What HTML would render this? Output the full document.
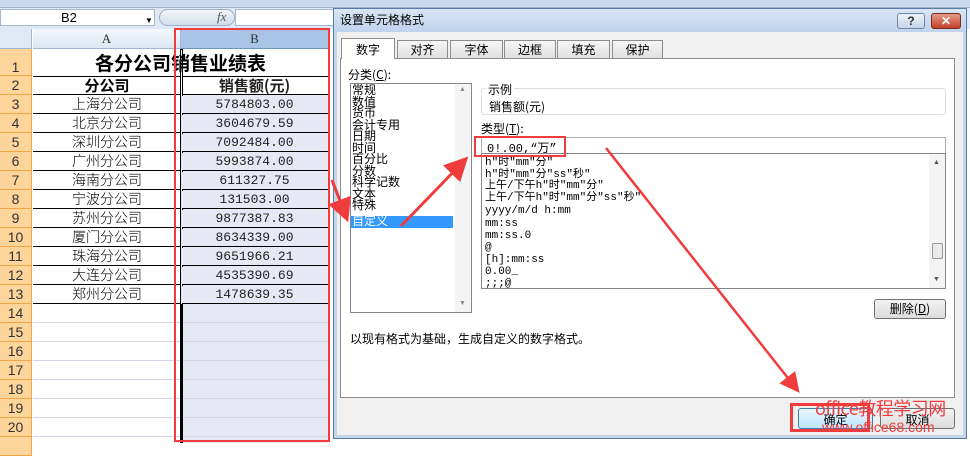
<!DOCTYPE html>
<html><head><meta charset="utf-8"><style>
*{margin:0;padding:0;box-sizing:border-box}
body{width:970px;height:443px;position:relative;overflow:hidden;background:#fff;font-family:"Liberation Sans","Noto Sans CJK SC",sans-serif;font-size:12px;color:#000}
.a{position:absolute}
.cj{font-family:"Noto Sans CJK SC","WenQuanYi Zen Hei",sans-serif}
.mono{font-family:"Liberation Mono","Noto Sans CJK SC",monospace}
.rh{position:absolute;left:0;width:32px;background:#fdd49a;border-bottom:1px solid #f2a64a;border-right:1px solid #f2a64a;text-align:center;font-size:14px;color:#333}
.ca{position:absolute;left:33px;width:148px;text-align:center;font-size:14px;font-weight:300}
.cb{position:absolute;left:181px;width:147px;text-align:center;font-size:13px;background:#e6e9f4;color:#222}
.hl{position:absolute;left:33px;width:295px;height:1px;background:#000}
.gl{position:absolute;left:33px;width:295px;height:1px;background:#d0d7e5}
.tab{position:absolute;top:40px;height:18px;background:linear-gradient(#f6f6f6,#e0e0e0);border:1px solid #8d8d8d;border-bottom:none;text-align:center;font-size:12px;line-height:17px}
.li{position:absolute;left:352px;font-size:12px;line-height:12px}
.ti{position:absolute;left:485px;font-size:11px;line-height:12px}
</style></head><body>
<div class="a" style="left:0;top:0;width:970px;height:8px;background:#c9d9ee;border-bottom:1px solid #9fb6d3"></div>
<div class="a" style="left:0;top:8px;width:970px;height:21px;background:#dfe8f5"></div>
<div class="a" style="left:0;top:9px;width:155px;height:17px;background:#fff;border:1px solid #a5b8d1;font-size:13px;line-height:15px;padding-left:60px">B2<span style="position:absolute;left:144px;font-size:8px;top:3px">▼</span></div>
<div class="a" style="left:159px;top:9px;width:76px;height:17px;border-radius:9px;background:linear-gradient(#f4f7fb,#d2dceb);border:1px solid #9fb2ca"></div>
<div class="a" style="left:217px;top:9px;font-style:italic;font-family:'Liberation Serif',serif;font-size:13px;color:#555">fx</div>
<div class="a" style="left:235px;top:9px;width:100px;height:17px;background:#fff;border:1px solid #a5b8d1"></div>
<div class="a" style="left:0;top:29px;width:32px;height:20px;background:#dfe8f5;border-right:1px solid #9eb6ce;border-bottom:1px solid #9eb6ce"></div>
<div class="a" style="left:33px;top:29px;width:148px;height:20px;background:linear-gradient(#f5f8fc,#dde6f2);border-right:1px solid #9eb6ce;border-bottom:1px solid #9eb6ce;text-align:center;font-size:13px;line-height:20px;color:#333;font-family:'Liberation Serif',serif">A</div>
<div class="a" style="left:181px;top:29px;width:147px;height:20px;background:#a9c4e6;border-bottom:1px solid #6f95c6;text-align:center;font-size:13px;line-height:20px;color:#333;font-family:'Liberation Serif',serif">B</div>
<div class="rh" style="top:49px;height:27px;line-height:36px">1</div>
<div class="rh" style="top:76px;height:19px;line-height:19px">2</div>
<div class="rh" style="top:95px;height:19px;line-height:19px">3</div>
<div class="rh" style="top:114px;height:19px;line-height:19px">4</div>
<div class="rh" style="top:133px;height:19px;line-height:19px">5</div>
<div class="rh" style="top:152px;height:19px;line-height:19px">6</div>
<div class="rh" style="top:171px;height:19px;line-height:19px">7</div>
<div class="rh" style="top:190px;height:19px;line-height:19px">8</div>
<div class="rh" style="top:209px;height:19px;line-height:19px">9</div>
<div class="rh" style="top:228px;height:19px;line-height:19px">10</div>
<div class="rh" style="top:247px;height:19px;line-height:19px">11</div>
<div class="rh" style="top:266px;height:19px;line-height:19px">12</div>
<div class="rh" style="top:285px;height:19px;line-height:19px">13</div>
<div class="rh" style="top:304px;height:19px;line-height:19px">14</div>
<div class="rh" style="top:323px;height:19px;line-height:19px">15</div>
<div class="rh" style="top:342px;height:19px;line-height:19px">16</div>
<div class="rh" style="top:361px;height:19px;line-height:19px">17</div>
<div class="rh" style="top:380px;height:19px;line-height:19px">18</div>
<div class="rh" style="top:399px;height:19px;line-height:19px">19</div>
<div class="rh" style="top:418px;height:19px;line-height:19px">20</div>
<div class="rh" style="top:437px;height:19px"></div>
<div class="a" style="left:181px;top:49px;width:147px;height:394px;background:#e6e9f4"></div>
<div class="a" style="left:181px;top:49px;width:147px;height:27px;background:#fff"></div>
<div class="a" style="left:181px;top:76px;width:147px;height:19px;background:#fff"></div>
<div class="gl" style="top:322px"></div><div class="gl" style="top:341px"></div><div class="gl" style="top:360px"></div><div class="gl" style="top:379px"></div><div class="gl" style="top:398px"></div><div class="gl" style="top:417px"></div><div class="gl" style="top:436px"></div>
<div class="hl" style="top:76px"></div><div class="hl" style="top:94px"></div><div class="hl" style="top:113px"></div><div class="hl" style="top:132px"></div><div class="hl" style="top:151px"></div><div class="hl" style="top:170px"></div><div class="hl" style="top:189px"></div><div class="hl" style="top:208px"></div><div class="hl" style="top:227px"></div><div class="hl" style="top:246px"></div><div class="hl" style="top:265px"></div><div class="hl" style="top:284px"></div><div class="hl" style="top:303px"></div>
<div class="a" style="left:180px;top:49px;width:3px;height:394px;background:#000"></div>
<div class="a" style="left:181px;top:50px;width:1px;height:254px;background:#fff"></div>
<div class="a cj" style="left:33px;top:50px;width:295px;text-align:center;font-size:19px;font-weight:bold;line-height:26px">各分公司销售业绩表</div>
<div class="ca cj" style="top:76px;line-height:19px;font-weight:bold;font-size:15px">分公司</div>
<div class="cb cj" style="top:76px;line-height:19px;font-weight:bold;font-size:15px;background:transparent">销售额(元)</div>
<div class="ca cj" style="top:95px;line-height:19px">上海分公司</div><div class="cb mono" style="top:96px;line-height:17px">5784803.00</div>
<div class="ca cj" style="top:114px;line-height:19px">北京分公司</div><div class="cb mono" style="top:115px;line-height:17px">3604679.59</div>
<div class="ca cj" style="top:133px;line-height:19px">深圳分公司</div><div class="cb mono" style="top:134px;line-height:17px">7092484.00</div>
<div class="ca cj" style="top:152px;line-height:19px">广州分公司</div><div class="cb mono" style="top:153px;line-height:17px">5993874.00</div>
<div class="ca cj" style="top:171px;line-height:19px">海南分公司</div><div class="cb mono" style="top:172px;line-height:17px">611327.75</div>
<div class="ca cj" style="top:190px;line-height:19px">宁波分公司</div><div class="cb mono" style="top:191px;line-height:17px">131503.00</div>
<div class="ca cj" style="top:209px;line-height:19px">苏州分公司</div><div class="cb mono" style="top:210px;line-height:17px">9877387.83</div>
<div class="ca cj" style="top:228px;line-height:19px">厦门分公司</div><div class="cb mono" style="top:229px;line-height:17px">8634339.00</div>
<div class="ca cj" style="top:247px;line-height:19px">珠海分公司</div><div class="cb mono" style="top:248px;line-height:17px">9651966.21</div>
<div class="ca cj" style="top:266px;line-height:19px">大连分公司</div><div class="cb mono" style="top:267px;line-height:17px">4535390.69</div>
<div class="ca cj" style="top:285px;line-height:19px">郑州分公司</div><div class="cb mono" style="top:286px;line-height:17px">1478639.35</div>
<div class="a" style="left:174px;top:28px;width:156px;height:414px;border:2px solid #f03c3c"></div>

<div class="a" style="left:333px;top:8px;width:634px;height:431px;background:#f0f0f0;border:1px solid #5a7ba6;box-shadow:inset 0 0 0 3px #c4d5ea"></div>
<div class="a" style="left:334px;top:9px;width:632px;height:23px;background:linear-gradient(#d8e5f4,#bfd3ec)"></div>
<div class="a cj" style="left:340px;top:11px;font-size:12px;line-height:18px">设置单元格格式</div>
<div class="a" style="left:897px;top:13px;width:28px;height:16px;border:1px solid #6d87a8;border-radius:3px;background:linear-gradient(#eef3f9,#c6d5e7);text-align:center;font-size:12px;font-weight:bold;line-height:14px;color:#333">?</div>
<div class="a" style="left:931px;top:13px;width:30px;height:16px;border:1px solid #7a2a20;border-radius:3px;background:linear-gradient(#e79a88,#c3402a);text-align:center;font-size:12px;font-weight:bold;line-height:14px;color:#fff">✕</div>
<div class="a" style="left:340px;top:58px;width:615px;height:340px;background:#fff;border:1px solid #8d8d8d"></div>
<div class="tab cj" style="left:341px;top:38px;width:54px;height:21px;background:#fff;border-color:#8d8d8d;line-height:21px;z-index:2">数字</div>
<div class="tab cj" style="left:397px;width:51px">对齐</div>
<div class="tab cj" style="left:450px;width:53px">字体</div>
<div class="tab cj" style="left:504px;width:52px">边框</div>
<div class="tab cj" style="left:557px;width:53px">填充</div>
<div class="tab cj" style="left:612px;width:51px">保护</div>
<div class="a cj" style="left:348px;top:66px;font-size:12px">分类(<u>C</u>):</div>
<div class="a" style="left:350px;top:83px;width:122px;height:230px;border:1px solid #828790;background:#fff"></div>
<div class="a" style="left:455px;top:84px;width:16px;height:228px;background:#f4f4f4"></div>
<div class="a" style="left:459px;top:86px;font-size:7px;color:#888">▲</div>
<div class="a" style="left:459px;top:300px;font-size:7px;color:#888">▼</div>
<div class="li cj" style="top:84px">常规</div>
<div class="li cj" style="top:96px">数值</div>
<div class="li cj" style="top:107px">货币</div>
<div class="li cj" style="top:119px">会计专用</div>
<div class="li cj" style="top:130px">日期</div>
<div class="li cj" style="top:142px">时间</div>
<div class="li cj" style="top:153px">百分比</div>
<div class="li cj" style="top:165px">分数</div>
<div class="li cj" style="top:176px">科学记数</div>
<div class="li cj" style="top:188px">文本</div>
<div class="li cj" style="top:199px">特殊</div>
<div class="a" style="left:351px;top:216px;width:102px;height:12px;background:#3399ff"></div>
<div class="li cj" style="top:215px;color:#fff">自定义</div>
<div class="a" style="left:481px;top:88px;width:465px;height:27px;border:1px solid #d5dfe5;border-radius:3px"></div>
<div class="a cj" style="left:486px;top:81px;background:#fff;padding:0 2px;font-size:12px">示例</div>
<div class="a cj" style="left:489px;top:98px;font-size:12px">销售额(元)</div>
<div class="a cj" style="left:481px;top:120px;font-size:12px">类型(<u>T</u>):</div>
<div class="a" style="left:481px;top:137px;width:465px;height:17px;border:1px solid #abadb3;background:#fff"></div>
<div class="a mono" style="left:487px;top:139px;font-size:12px">0!.00,“万”</div>
<div class="a" style="left:481px;top:153px;width:465px;height:136px;border:1px solid #828790;background:#fff"></div>
<div class="a" style="left:929px;top:154px;width:16px;height:134px;background:#f4f4f4"></div>
<div class="a" style="left:932px;top:243px;width:11px;height:16px;border:1px solid #999;background:#eaeaea;border-radius:2px"></div>
<div class="a" style="left:933px;top:159px;font-size:7px;color:#555">▲</div>
<div class="a" style="left:933px;top:276px;font-size:7px;color:#555">▼</div>
<div class="ti mono" style="top:157px">h"时"mm"分"</div>
<div class="ti mono" style="top:169px">h"时"mm"分"ss"秒"</div>
<div class="ti mono" style="top:180px">上午/下午h"时"mm"分"</div>
<div class="ti mono" style="top:192px">上午/下午h"时"mm"分"ss"秒"</div>
<div class="ti mono" style="top:205px">yyyy/m/d h:mm</div>
<div class="ti mono" style="top:218px">mm:ss</div>
<div class="ti mono" style="top:230px">mm:ss.0</div>
<div class="ti mono" style="top:242px">@</div>
<div class="ti mono" style="top:254px">[h]:mm:ss</div>
<div class="ti mono" style="top:266px">0.00_</div>
<div class="ti mono" style="top:278px">;;;@</div>
<div class="a cj" style="left:874px;top:299px;width:72px;height:20px;border:1px solid #707070;border-radius:3px;background:linear-gradient(#f2f2f2,#dcdcdc);text-align:center;font-size:12px;line-height:18px">删除(<u>D</u>)</div>
<div class="a cj" style="left:350px;top:330px;font-size:12px">以现有格式为基础，生成自定义的数字格式。</div>
<div class="a cj" style="left:798px;top:408px;width:75px;height:21px;border:1px solid #3c7fb1;border-radius:3px;background:linear-gradient(#eaf6fd,#bee6fd);text-align:center;font-size:12px;line-height:22px">确定</div>
<div class="a cj" style="left:880px;top:408px;width:75px;height:21px;border:1px solid #707070;border-radius:3px;background:linear-gradient(#f2f2f2,#dcdcdc);text-align:center;font-size:12px;line-height:22px">取消</div>
<div class="a" style="left:474px;top:136px;width:92px;height:21px;border:2px solid #f03c3c"></div>
<div class="a" style="left:790px;top:403px;width:80px;height:29px;border:3px solid #f03c3c"></div>
<svg class="a" style="left:0;top:0" width="970" height="443">
<defs><marker id="m" markerWidth="8" markerHeight="8" refX="5" refY="4" orient="auto"><path d="M0,0 L8,4 L0,8 z" fill="#f03c3c"/></marker></defs>
<line x1="401" y1="226" x2="462" y2="163" stroke="#f03c3c" stroke-width="3" marker-end="url(#m)"/>
<line x1="332" y1="180" x2="345" y2="214" stroke="#f03c3c" stroke-width="3" marker-end="url(#m)"/>
<line x1="606" y1="148" x2="795" y2="387" stroke="#f03c3c" stroke-width="2.5" marker-end="url(#m)"/>
</svg>
<div class="a cj" style="left:815px;top:397px;font-size:18px;color:#f03c3c;line-height:22px;letter-spacing:-0.5px">office教程学习网</div>
<div class="a" style="left:822px;top:419px;font-size:14px;color:#f03c3c;line-height:16px">www.office68.com</div>
</body></html>
